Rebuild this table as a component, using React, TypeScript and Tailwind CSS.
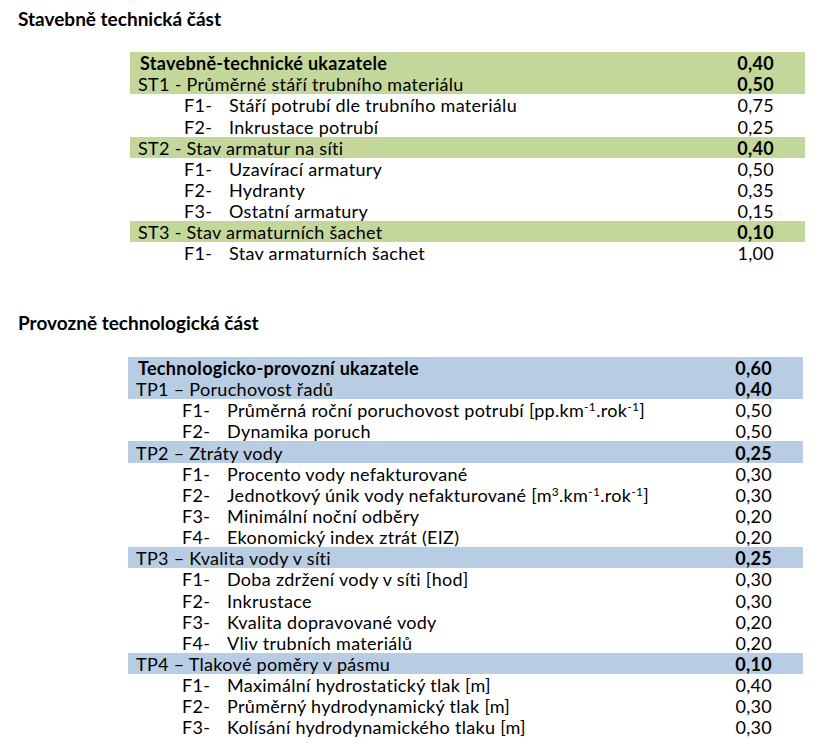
import React from 'react';

type Row =
  | { kind: 'head'; text: React.ReactNode; value: string }
  | { kind: 'group'; text: React.ReactNode; value: string }
  | { kind: 'item'; code: string; text: React.ReactNode; value: string };

const km = (
  <>
    [pp.km<sup className="text-[12px]">-1</sup>.rok<sup className="text-[12px]">-1</sup>]
  </>
);

const km3 = (
  <>
    [m<sup className="text-[12px]">3</sup>.km<sup className="text-[12px]">-1</sup>.rok<sup className="text-[12px]">-1</sup>]
  </>
);

const stavebni: Row[] = [
  { kind: 'head', text: 'Stavebně-technické ukazatele', value: '0,40' },
  { kind: 'group', text: 'ST1 - Průměrné stáří trubního materiálu', value: '0,50' },
  { kind: 'item', code: 'F1-', text: 'Stáří potrubí dle trubního materiálu', value: '0,75' },
  { kind: 'item', code: 'F2-', text: 'Inkrustace potrubí', value: '0,25' },
  { kind: 'group', text: 'ST2 - Stav armatur na síti', value: '0,40' },
  { kind: 'item', code: 'F1-', text: 'Uzavírací armatury', value: '0,50' },
  { kind: 'item', code: 'F2-', text: 'Hydranty', value: '0,35' },
  { kind: 'item', code: 'F3-', text: 'Ostatní armatury', value: '0,15' },
  { kind: 'group', text: 'ST3 - Stav armaturních šachet', value: '0,10' },
  { kind: 'item', code: 'F1-', text: 'Stav armaturních šachet', value: '1,00' },
];

const provozni: Row[] = [
  { kind: 'head', text: 'Technologicko-provozní ukazatele', value: '0,60' },
  { kind: 'group', text: 'TP1 – Poruchovost řadů', value: '0,40' },
  { kind: 'item', code: 'F1-', text: <>Průměrná roční poruchovost potrubí {km}</>, value: '0,50' },
  { kind: 'item', code: 'F2-', text: 'Dynamika poruch', value: '0,50' },
  { kind: 'group', text: 'TP2 – Ztráty vody', value: '0,25' },
  { kind: 'item', code: 'F1-', text: 'Procento vody nefakturované', value: '0,30' },
  { kind: 'item', code: 'F2-', text: <>Jednotkový únik vody nefakturované {km3}</>, value: '0,30' },
  { kind: 'item', code: 'F3-', text: 'Minimální noční odběry', value: '0,20' },
  { kind: 'item', code: 'F4-', text: 'Ekonomický index ztrát (EIZ)', value: '0,20' },
  { kind: 'group', text: 'TP3 – Kvalita vody v síti', value: '0,25' },
  { kind: 'item', code: 'F1-', text: 'Doba zdržení vody v síti [hod]', value: '0,30' },
  { kind: 'item', code: 'F2-', text: 'Inkrustace', value: '0,30' },
  { kind: 'item', code: 'F3-', text: 'Kvalita dopravované vody', value: '0,20' },
  { kind: 'item', code: 'F4-', text: 'Vliv trubních materiálů', value: '0,20' },
  { kind: 'group', text: 'TP4 – Tlakové poměry v pásmu', value: '0,10' },
  { kind: 'item', code: 'F1-', text: 'Maximální hydrostatický tlak [m]', value: '0,40' },
  { kind: 'item', code: 'F2-', text: 'Průměrný hydrodynamický tlak [m]', value: '0,30' },
  { kind: 'item', code: 'F3-', text: 'Kolísání hydrodynamického tlaku [m]', value: '0,30' },
];

function Table({ rows, bg, left }: { rows: Row[]; bg: string; left: string }) {
  return (
    <div className={`${left} w-[675px] text-[18px] tracking-[0.3px]`}>
      {rows.map((r, i) => {
        const shaded = r.kind !== 'item';
        const bold = r.kind === 'head';
        return (
          <div
            key={i}
            className={`flex h-[21.15px] items-end overflow-hidden pr-[31px] ${shaded ? bg : 'bg-white'}`}
          >
            <div className="flex-1 whitespace-nowrap">
              {r.kind === 'item' ? (
                <span className="flex pl-[54px] leading-none mb-[1px]">
                  <span className="w-[45px]">{r.code}</span>
                  <span>{r.text}</span>
                </span>
              ) : (
                <span className={`block leading-none mb-[1px] ${bold ? 'pl-[10px] font-bold' : 'pl-[8px]'}`}>
                  {r.text}
                </span>
              )}
            </div>
            <span className={`leading-none mb-[1px] ${shaded ? 'font-bold' : ''}`}>{r.value}</span>
          </div>
        );
      })}
    </div>
  );
}

export default function App() {
  return (
    <div
      className="w-[826px] h-[756px] overflow-hidden bg-white text-black"
      style={{ fontFamily: 'Lato, "Open Sans", sans-serif' }}
    >
      <h2 className="pl-[18px] pt-[9px] text-[19px] font-bold leading-none">Stavebně technická část</h2>
      <div className="mt-[24px]">
        <Table rows={stavebni} bg="bg-[#c4d79b]" left="ml-[130px]" />
      </div>
      <h2 className="pl-[18px] mt-[49.5px] text-[19px] font-bold leading-none">Provozně technologická část</h2>
      <div className="mt-[25px]">
        <Table rows={provozni} bg="bg-[#b8cce4]" left="ml-[128px]" />
      </div>
    </div>
  );
}
